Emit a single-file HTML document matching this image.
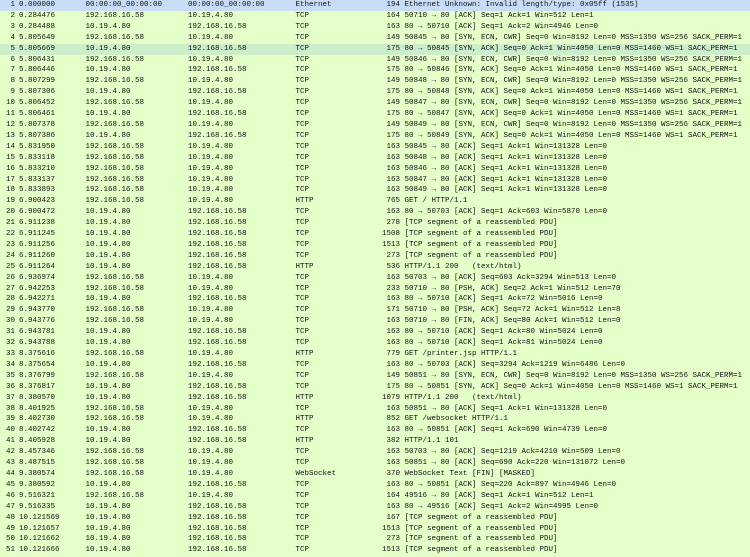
<!DOCTYPE html>
<html><head><meta charset="utf-8"><style>
body{margin:0;width:750px;height:557px;overflow:hidden;background:#e4ffc7;font-family:"Liberation Mono",monospace;font-size:7.5px;color:#121212}
.r{position:relative;height:10.92px;line-height:10.92px;background:#e4ffc7;white-space:pre}
.r.e{background:#c9dcf5}.r.h{background:#cdeecb}
.r span{position:absolute;top:0}
.a{right:735px;text-align:right}
.b{left:19px}.c{left:85.5px}.d{left:188px}.f{left:295.5px}
.g{right:350px;text-align:right}.k{left:404.5px}
</style></head><body>
<div class="r e"><span class=a>1</span><span class=b>0.000000</span><span class=c>00:00:00_00:00:00</span><span class=d>00:00:00_00:00:00</span><span class=f>Ethernet</span><span class=g>194</span><span class=k>Ethernet Unknown: Invalid length/type: 0x05ff (1535)</span></div>
<div class=r><span class=a>2</span><span class=b>0.284476</span><span class=c>192.168.16.58</span><span class=d>10.19.4.80</span><span class=f>TCP</span><span class=g>164</span><span class=k>50710 → 80 [ACK] Seq=1 Ack=1 Win=512 Len=1</span></div>
<div class=r><span class=a>3</span><span class=b>0.284488</span><span class=c>10.19.4.80</span><span class=d>192.168.16.58</span><span class=f>TCP</span><span class=g>163</span><span class=k>80 → 50710 [ACK] Seq=1 Ack=2 Win=4946 Len=0</span></div>
<div class=r><span class=a>4</span><span class=b>5.805649</span><span class=c>192.168.16.58</span><span class=d>10.19.4.80</span><span class=f>TCP</span><span class=g>149</span><span class=k>50845 → 80 [SYN, ECN, CWR] Seq=0 Win=8192 Len=0 MSS=1350 WS=256 SACK_PERM=1</span></div>
<div class="r h"><span class=a>5</span><span class=b>5.805669</span><span class=c>10.19.4.80</span><span class=d>192.168.16.58</span><span class=f>TCP</span><span class=g>175</span><span class=k>80 → 50845 [SYN, ACK] Seq=0 Ack=1 Win=4050 Len=0 MSS=1460 WS=1 SACK_PERM=1</span></div>
<div class=r><span class=a>6</span><span class=b>5.806431</span><span class=c>192.168.16.58</span><span class=d>10.19.4.80</span><span class=f>TCP</span><span class=g>149</span><span class=k>50846 → 80 [SYN, ECN, CWR] Seq=0 Win=8192 Len=0 MSS=1350 WS=256 SACK_PERM=1</span></div>
<div class=r><span class=a>7</span><span class=b>5.806446</span><span class=c>10.19.4.80</span><span class=d>192.168.16.58</span><span class=f>TCP</span><span class=g>175</span><span class=k>80 → 50846 [SYN, ACK] Seq=0 Ack=1 Win=4050 Len=0 MSS=1460 WS=1 SACK_PERM=1</span></div>
<div class=r><span class=a>8</span><span class=b>5.807299</span><span class=c>192.168.16.58</span><span class=d>10.19.4.80</span><span class=f>TCP</span><span class=g>149</span><span class=k>50848 → 80 [SYN, ECN, CWR] Seq=0 Win=8192 Len=0 MSS=1350 WS=256 SACK_PERM=1</span></div>
<div class=r><span class=a>9</span><span class=b>5.807306</span><span class=c>10.19.4.80</span><span class=d>192.168.16.58</span><span class=f>TCP</span><span class=g>175</span><span class=k>80 → 50848 [SYN, ACK] Seq=0 Ack=1 Win=4050 Len=0 MSS=1460 WS=1 SACK_PERM=1</span></div>
<div class=r><span class=a>10</span><span class=b>5.806452</span><span class=c>192.168.16.58</span><span class=d>10.19.4.80</span><span class=f>TCP</span><span class=g>149</span><span class=k>50847 → 80 [SYN, ECN, CWR] Seq=0 Win=8192 Len=0 MSS=1350 WS=256 SACK_PERM=1</span></div>
<div class=r><span class=a>11</span><span class=b>5.806461</span><span class=c>10.19.4.80</span><span class=d>192.168.16.58</span><span class=f>TCP</span><span class=g>175</span><span class=k>80 → 50847 [SYN, ACK] Seq=0 Ack=1 Win=4050 Len=0 MSS=1460 WS=1 SACK_PERM=1</span></div>
<div class=r><span class=a>12</span><span class=b>5.807378</span><span class=c>192.168.16.58</span><span class=d>10.19.4.80</span><span class=f>TCP</span><span class=g>149</span><span class=k>50849 → 80 [SYN, ECN, CWR] Seq=0 Win=8192 Len=0 MSS=1350 WS=256 SACK_PERM=1</span></div>
<div class=r><span class=a>13</span><span class=b>5.807386</span><span class=c>10.19.4.80</span><span class=d>192.168.16.58</span><span class=f>TCP</span><span class=g>175</span><span class=k>80 → 50849 [SYN, ACK] Seq=0 Ack=1 Win=4050 Len=0 MSS=1460 WS=1 SACK_PERM=1</span></div>
<div class=r><span class=a>14</span><span class=b>5.831950</span><span class=c>192.168.16.58</span><span class=d>10.19.4.80</span><span class=f>TCP</span><span class=g>163</span><span class=k>50845 → 80 [ACK] Seq=1 Ack=1 Win=131328 Len=0</span></div>
<div class=r><span class=a>15</span><span class=b>5.833118</span><span class=c>192.168.16.58</span><span class=d>10.19.4.80</span><span class=f>TCP</span><span class=g>163</span><span class=k>50848 → 80 [ACK] Seq=1 Ack=1 Win=131328 Len=0</span></div>
<div class=r><span class=a>16</span><span class=b>5.833210</span><span class=c>192.168.16.58</span><span class=d>10.19.4.80</span><span class=f>TCP</span><span class=g>163</span><span class=k>50846 → 80 [ACK] Seq=1 Ack=1 Win=131328 Len=0</span></div>
<div class=r><span class=a>17</span><span class=b>5.833137</span><span class=c>192.168.16.58</span><span class=d>10.19.4.80</span><span class=f>TCP</span><span class=g>163</span><span class=k>50847 → 80 [ACK] Seq=1 Ack=1 Win=131328 Len=0</span></div>
<div class=r><span class=a>18</span><span class=b>5.833893</span><span class=c>192.168.16.58</span><span class=d>10.19.4.80</span><span class=f>TCP</span><span class=g>163</span><span class=k>50849 → 80 [ACK] Seq=1 Ack=1 Win=131328 Len=0</span></div>
<div class=r><span class=a>19</span><span class=b>6.900423</span><span class=c>192.168.16.58</span><span class=d>10.19.4.80</span><span class=f>HTTP</span><span class=g>765</span><span class=k>GET / HTTP/1.1</span></div>
<div class=r><span class=a>20</span><span class=b>6.900472</span><span class=c>10.19.4.80</span><span class=d>192.168.16.58</span><span class=f>TCP</span><span class=g>163</span><span class=k>80 → 50703 [ACK] Seq=1 Ack=603 Win=5870 Len=0</span></div>
<div class=r><span class=a>21</span><span class=b>6.911238</span><span class=c>10.19.4.80</span><span class=d>192.168.16.58</span><span class=f>TCP</span><span class=g>278</span><span class=k>[TCP segment of a reassembled PDU]</span></div>
<div class=r><span class=a>22</span><span class=b>6.911245</span><span class=c>10.19.4.80</span><span class=d>192.168.16.58</span><span class=f>TCP</span><span class=g>1508</span><span class=k>[TCP segment of a reassembled PDU]</span></div>
<div class=r><span class=a>23</span><span class=b>6.911256</span><span class=c>10.19.4.80</span><span class=d>192.168.16.58</span><span class=f>TCP</span><span class=g>1513</span><span class=k>[TCP segment of a reassembled PDU]</span></div>
<div class=r><span class=a>24</span><span class=b>6.911260</span><span class=c>10.19.4.80</span><span class=d>192.168.16.58</span><span class=f>TCP</span><span class=g>273</span><span class=k>[TCP segment of a reassembled PDU]</span></div>
<div class=r><span class=a>25</span><span class=b>6.911264</span><span class=c>10.19.4.80</span><span class=d>192.168.16.58</span><span class=f>HTTP</span><span class=g>536</span><span class=k>HTTP/1.1 200   (text/html)</span></div>
<div class=r><span class=a>26</span><span class=b>6.936974</span><span class=c>192.168.16.58</span><span class=d>10.19.4.80</span><span class=f>TCP</span><span class=g>163</span><span class=k>50703 → 80 [ACK] Seq=603 Ack=3294 Win=513 Len=0</span></div>
<div class=r><span class=a>27</span><span class=b>6.942253</span><span class=c>192.168.16.58</span><span class=d>10.19.4.80</span><span class=f>TCP</span><span class=g>233</span><span class=k>50710 → 80 [PSH, ACK] Seq=2 Ack=1 Win=512 Len=70</span></div>
<div class=r><span class=a>28</span><span class=b>6.942271</span><span class=c>10.19.4.80</span><span class=d>192.168.16.58</span><span class=f>TCP</span><span class=g>163</span><span class=k>80 → 50710 [ACK] Seq=1 Ack=72 Win=5016 Len=0</span></div>
<div class=r><span class=a>29</span><span class=b>6.943770</span><span class=c>192.168.16.58</span><span class=d>10.19.4.80</span><span class=f>TCP</span><span class=g>171</span><span class=k>50710 → 80 [PSH, ACK] Seq=72 Ack=1 Win=512 Len=8</span></div>
<div class=r><span class=a>30</span><span class=b>6.943776</span><span class=c>192.168.16.58</span><span class=d>10.19.4.80</span><span class=f>TCP</span><span class=g>163</span><span class=k>50710 → 80 [FIN, ACK] Seq=80 Ack=1 Win=512 Len=0</span></div>
<div class=r><span class=a>31</span><span class=b>6.943781</span><span class=c>10.19.4.80</span><span class=d>192.168.16.58</span><span class=f>TCP</span><span class=g>163</span><span class=k>80 → 50710 [ACK] Seq=1 Ack=80 Win=5024 Len=0</span></div>
<div class=r><span class=a>32</span><span class=b>6.943788</span><span class=c>10.19.4.80</span><span class=d>192.168.16.58</span><span class=f>TCP</span><span class=g>163</span><span class=k>80 → 50710 [ACK] Seq=1 Ack=81 Win=5024 Len=0</span></div>
<div class=r><span class=a>33</span><span class=b>8.375616</span><span class=c>192.168.16.58</span><span class=d>10.19.4.80</span><span class=f>HTTP</span><span class=g>779</span><span class=k>GET /printer.jsp HTTP/1.1</span></div>
<div class=r><span class=a>34</span><span class=b>8.375654</span><span class=c>10.19.4.80</span><span class=d>192.168.16.58</span><span class=f>TCP</span><span class=g>163</span><span class=k>80 → 50703 [ACK] Seq=3294 Ack=1219 Win=6486 Len=0</span></div>
<div class=r><span class=a>35</span><span class=b>8.376799</span><span class=c>192.168.16.58</span><span class=d>10.19.4.80</span><span class=f>TCP</span><span class=g>149</span><span class=k>50851 → 80 [SYN, ECN, CWR] Seq=0 Win=8192 Len=0 MSS=1350 WS=256 SACK_PERM=1</span></div>
<div class=r><span class=a>36</span><span class=b>8.376817</span><span class=c>10.19.4.80</span><span class=d>192.168.16.58</span><span class=f>TCP</span><span class=g>175</span><span class=k>80 → 50851 [SYN, ACK] Seq=0 Ack=1 Win=4050 Len=0 MSS=1460 WS=1 SACK_PERM=1</span></div>
<div class=r><span class=a>37</span><span class=b>8.380570</span><span class=c>10.19.4.80</span><span class=d>192.168.16.58</span><span class=f>HTTP</span><span class=g>1079</span><span class=k>HTTP/1.1 200   (text/html)</span></div>
<div class=r><span class=a>38</span><span class=b>8.401925</span><span class=c>192.168.16.58</span><span class=d>10.19.4.80</span><span class=f>TCP</span><span class=g>163</span><span class=k>50851 → 80 [ACK] Seq=1 Ack=1 Win=131328 Len=0</span></div>
<div class=r><span class=a>39</span><span class=b>8.402730</span><span class=c>192.168.16.58</span><span class=d>10.19.4.80</span><span class=f>HTTP</span><span class=g>852</span><span class=k>GET /websocket HTTP/1.1</span></div>
<div class=r><span class=a>40</span><span class=b>8.402742</span><span class=c>10.19.4.80</span><span class=d>192.168.16.58</span><span class=f>TCP</span><span class=g>163</span><span class=k>80 → 50851 [ACK] Seq=1 Ack=690 Win=4739 Len=0</span></div>
<div class=r><span class=a>41</span><span class=b>8.405928</span><span class=c>10.19.4.80</span><span class=d>192.168.16.58</span><span class=f>HTTP</span><span class=g>382</span><span class=k>HTTP/1.1 101</span></div>
<div class=r><span class=a>42</span><span class=b>8.457346</span><span class=c>192.168.16.58</span><span class=d>10.19.4.80</span><span class=f>TCP</span><span class=g>163</span><span class=k>50703 → 80 [ACK] Seq=1219 Ack=4210 Win=509 Len=0</span></div>
<div class=r><span class=a>43</span><span class=b>8.487515</span><span class=c>192.168.16.58</span><span class=d>10.19.4.80</span><span class=f>TCP</span><span class=g>163</span><span class=k>50851 → 80 [ACK] Seq=690 Ack=220 Win=131072 Len=0</span></div>
<div class=r><span class=a>44</span><span class=b>9.380574</span><span class=c>192.168.16.58</span><span class=d>10.19.4.80</span><span class=f>WebSocket</span><span class=g>370</span><span class=k>WebSocket Text [FIN] [MASKED]</span></div>
<div class=r><span class=a>45</span><span class=b>9.380592</span><span class=c>10.19.4.80</span><span class=d>192.168.16.58</span><span class=f>TCP</span><span class=g>163</span><span class=k>80 → 50851 [ACK] Seq=220 Ack=897 Win=4946 Len=0</span></div>
<div class=r><span class=a>46</span><span class=b>9.516321</span><span class=c>192.168.16.58</span><span class=d>10.19.4.80</span><span class=f>TCP</span><span class=g>164</span><span class=k>49516 → 80 [ACK] Seq=1 Ack=1 Win=512 Len=1</span></div>
<div class=r><span class=a>47</span><span class=b>9.516335</span><span class=c>10.19.4.80</span><span class=d>192.168.16.58</span><span class=f>TCP</span><span class=g>163</span><span class=k>80 → 49516 [ACK] Seq=1 Ack=2 Win=4995 Len=0</span></div>
<div class=r><span class=a>48</span><span class=b>10.121569</span><span class=c>10.19.4.80</span><span class=d>192.168.16.58</span><span class=f>TCP</span><span class=g>167</span><span class=k>[TCP segment of a reassembled PDU]</span></div>
<div class=r><span class=a>49</span><span class=b>10.121657</span><span class=c>10.19.4.80</span><span class=d>192.168.16.58</span><span class=f>TCP</span><span class=g>1513</span><span class=k>[TCP segment of a reassembled PDU]</span></div>
<div class=r><span class=a>50</span><span class=b>10.121662</span><span class=c>10.19.4.80</span><span class=d>192.168.16.58</span><span class=f>TCP</span><span class=g>273</span><span class=k>[TCP segment of a reassembled PDU]</span></div>
<div class=r><span class=a>51</span><span class=b>10.121666</span><span class=c>10.19.4.80</span><span class=d>192.168.16.58</span><span class=f>TCP</span><span class=g>1513</span><span class=k>[TCP segment of a reassembled PDU]</span></div>
</body></html>
